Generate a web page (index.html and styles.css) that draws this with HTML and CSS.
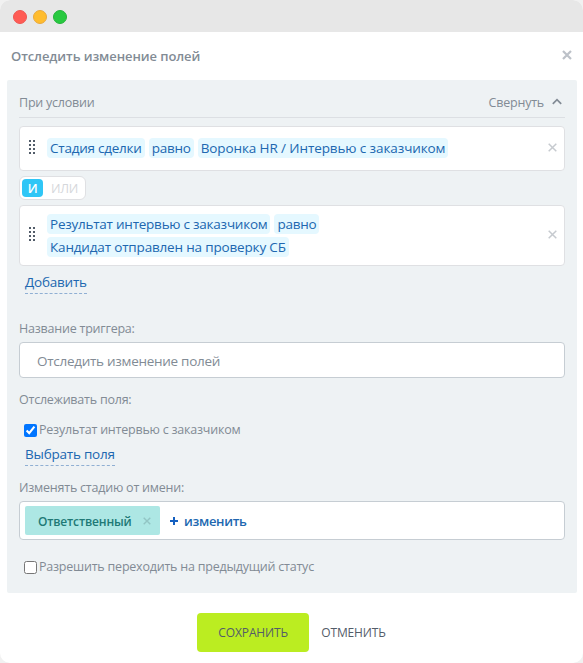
FILE: index.html
```html
<!DOCTYPE html>
<html lang="ru">

<head>
  <meta charset="UTF-8" />
  <meta name="viewport" content="width=device-width, initial-scale=1.0" />
  <title>Отследить изменение полей</title>
  <link rel="stylesheet" href="styles.css">
</head>

<body>
  <div class="window">
    <div class="titlebar">
      <span class="dot red"></span>
      <span class="dot yellow"></span>
      <span class="dot green"></span>
    </div>

    <div class="popup-header">
      <h1>Отследить изменение полей</h1>
      <svg class="close" width="10" height="10" viewBox="0 0 10 10">
        <path d="M1 1l8 8M9 1L1 9" fill="none" stroke="#bcc1c8" stroke-width="2.2" />
      </svg>
    </div>

    <div class="panel">
      <div class="panel-head">
        <span>При условии</span>
        <span class="collapse">
          <span>Свернуть</span>
          <svg width="10" height="7" viewBox="0 0 10 7">
            <path d="M.8 5.8L5 1.6l4.2 4.2" fill="none" stroke="#828b95" stroke-width="1.7" />
          </svg>
        </span>
      </div>

      <div class="condition">
        <svg class="drag" width="6" height="14" viewBox="0 0 6 14">
          <path d="M1 0v14M5 0v14" stroke="#525c69" stroke-width="2" stroke-dasharray="2 2" />
        </svg>
        <div class="tags">
          <div class="tag-row">
            <span class="tag">Стадия сделки</span>
            <span class="tag">равно</span>
            <span class="tag wide">Воронка HR / Интервью с заказчиком</span>
          </div>
        </div>
        <svg class="remove" width="9" height="9" viewBox="0 0 9 9">
          <path d="M.7.7l7.6 7.6M8.3.7L.7 8.3" fill="none" stroke="#c6cacf" stroke-width="1.5" />
        </svg>
      </div>

      <div class="joiner">
        <span class="joiner-item active">И</span>
        <span class="joiner-item">ИЛИ</span>
      </div>

      <div class="condition tall">
        <svg class="drag" width="6" height="14" viewBox="0 0 6 14">
          <path d="M1 0v14M5 0v14" stroke="#525c69" stroke-width="2" stroke-dasharray="2 2" />
        </svg>
        <div class="tags">
          <div class="tag-row">
            <span class="tag">Результат интервью с заказчиком</span>
            <span class="tag">равно</span>
          </div>
          <div class="tag-row">
            <span class="tag wide">Кандидат отправлен на проверку СБ</span>
          </div>
        </div>
        <svg class="remove" width="9" height="9" viewBox="0 0 9 9">
          <path d="M.7.7l7.6 7.6M8.3.7L.7 8.3" fill="none" stroke="#c6cacf" stroke-width="1.5" />
        </svg>
      </div>

      <a class="link add">Добавить</a>

      <div class="label name-label">Название триггера:</div>
      <div class="field">Отследить изменение полей</div>

      <div class="label track-label">Отслеживать поля:</div>
      <label class="check">
        <input type="checkbox" checked />
        <span>Результат интервью с заказчиком</span>
      </label>
      <a class="link choose">Выбрать поля</a>

      <div class="label user-label">Изменять стадию от имени:</div>
      <div class="user-field">
        <span class="user">
          <span class="user-name">Ответственный</span>
          <svg width="8" height="8" viewBox="0 0 8 8">
            <path d="M.7.7l6.6 6.6M7.3.7L.7 7.3" fill="none" stroke="#92c5c4" stroke-width="1.4" />
          </svg>
        </span>
        <span class="change">
          <svg width="8" height="8" viewBox="0 0 8 8">
            <path d="M4 0v8M0 4h8" stroke="#1560c0" stroke-width="2" />
          </svg>
          <span>изменить</span>
        </span>
      </div>

      <label class="check back">
        <input type="checkbox" />
        <span>Разрешить переходить на предыдущий статус</span>
      </label>
    </div>

    <div class="buttons">
      <button class="btn save">СОХРАНИТЬ</button>
      <button class="btn cancel">ОТМЕНИТЬ</button>
    </div>
  </div>
</body>

</html>
```
FILE: styles.css
```css
* {
  box-sizing: border-box;
}

body {
  margin: 0;
  background: #f1f1f1;
  font-family: "Open Sans", sans-serif;
  font-size: 12.5px;
  letter-spacing: -0.22px;
  color: #828b95;
}

svg {
  display: block;
  flex: none;
}

.window {
  height: 663px;
  background: #fff;
  border-radius: 10px;
  overflow: hidden;
}

.titlebar {
  display: flex;
  align-items: center;
  gap: 6px;
  height: 32px;
  padding: 2px 13px 0;
  background: #e7e7e7;
}

.dot {
  width: 14px;
  height: 14px;
  border-radius: 50%;
}

.red {
  background: #ff5b54;
  border: 1px solid #ed5652;
}

.yellow {
  background: #ffbc2e;
  border: 1px solid #e8a83c;
}

.green {
  background: #28c940;
  border: 1px solid #24b23a;
}

.popup-header {
  display: flex;
  align-items: center;
  justify-content: space-between;
  height: 48px;
  padding: 0 11px;
}

h1 {
  margin: 0;
  font-size: 13px;
  font-weight: 600;
  letter-spacing: -0.08px;
  line-height: 18px;
}

.close {
  margin-top: -2px;
}

.panel {
  height: 513px;
  margin: 0 6px 0 7px;
  padding: 0 12px;
  background: #eef2f4;
  border-radius: 2px;
}

.panel-head {
  display: flex;
  justify-content: space-between;
  height: 38px;
  padding-top: 13px;
  line-height: 20px;
  border-bottom: 1px solid #dcdfe3;
}

.collapse {
  display: flex;
  gap: 8px;
  padding-right: 3px;
}

.collapse svg {
  margin-top: 5px;
}

.condition {
  display: flex;
  align-items: flex-start;
  height: 45px;
  margin-top: 8px;
  padding: 0 7px 0 9px;
  background: #fff;
  border: 1px solid #dfe0e3;
  border-radius: 4px;
}

.drag {
  margin-top: 13px;
}

.tags {
  flex: 1;
  margin: 11px 0 0 12px;
}

.remove {
  margin-top: 16px;
}

.tall {
  height: 61px;
  margin-top: 5px;
}

.tall .drag {
  margin-top: 21px;
}

.tall .tags {
  margin-top: 8px;
}

.tall .remove {
  margin-top: 24px;
}

.tag-row {
  display: flex;
  gap: 4px;
  height: 23px;
}

.tag {
  height: 20px;
  padding: 0 3px;
  background: #e5f8ff;
  border-radius: 4px;
  color: #2067b0;
  font-size: 13.5px;
  letter-spacing: -0.24px;
  line-height: 20px;
  white-space: nowrap;
}

.wide {
  letter-spacing: -0.1px;
}

.tall .wide {
  letter-spacing: -0.17px;
}

.joiner {
  display: flex;
  width: 67px;
  height: 24px;
  margin-top: 5px;
  padding: 2px;
  background: #fff;
  border: 1px solid #dfe0e3;
  border-radius: 6px;
}

.joiner-item {
  width: 40px;
  padding-left: 3px;
  color: #d5d7db;
  line-height: 19px;
  text-align: center;
}

.active {
  width: 21px;
  height: 18px;
  padding: 0;
  background: #2fc6f6;
  border-radius: 4px;
  color: #fff;
  font-weight: 600;
}

.link {
  display: block;
  width: max-content;
  height: 20px;
  margin-left: 6px;
  border-bottom: 1px dashed #8fafd3;
  color: #2067b0;
  font-size: 13.5px;
  line-height: 16px;
}

.add {
  margin-top: 8px;
}

.label {
  height: 18px;
  line-height: 20px;
}

.name-label {
  margin-top: 25px;
}

.field {
  height: 36px;
  margin-top: 5px;
  padding-left: 17px;
  background: #fff;
  border: 1px solid #c6cdd3;
  border-radius: 4px;
  font-size: 13.5px;
  letter-spacing: -0.28px;
  line-height: 36px;
}

.track-label {
  margin-top: 12px;
}

.check {
  display: flex;
  align-items: flex-start;
  gap: 2px;
  height: 18px;
  margin: 12px 0 0 5px;
  line-height: 20px;
}

.check input {
  width: 13px;
  height: 13px;
  margin: 4px 0 0;
}

.choose {
  margin-top: 8px;
}

.user-label {
  margin-top: 12px;
}

.user-field {
  display: flex;
  align-items: center;
  gap: 10px;
  height: 39px;
  margin-top: 5px;
  padding-left: 5px;
  background: #fff;
  border: 1px solid #c6cdd3;
  border-radius: 4px;
  font-weight: 600;
}

.user {
  display: flex;
  align-items: center;
  justify-content: space-between;
  width: 135px;
  height: 29px;
  padding: 0 9px 0 13px;
  background: #ade7e4;
  border-radius: 2px;
  color: #207976;
  font-size: 12px;
  letter-spacing: -0.15px;
}

.user-name {
  padding-top: 2px;
}

.change {
  display: flex;
  align-items: center;
  gap: 6px;
  color: #2067b0;
  font-size: 13px;
  letter-spacing: -0.3px;
}

.back {
  margin-top: 17px;
}

.buttons {
  display: flex;
  justify-content: center;
  gap: 12px;
  padding-top: 20px;
}

.btn {
  height: 39px;
  padding: 0;
  background: none;
  border: none;
  color: #535c69;
  font-family: inherit;
  font-size: 12px;
  letter-spacing: -0.12px;
}

.save {
  width: 112px;
  background: #bbed21;
  border-radius: 4px;
}
```
